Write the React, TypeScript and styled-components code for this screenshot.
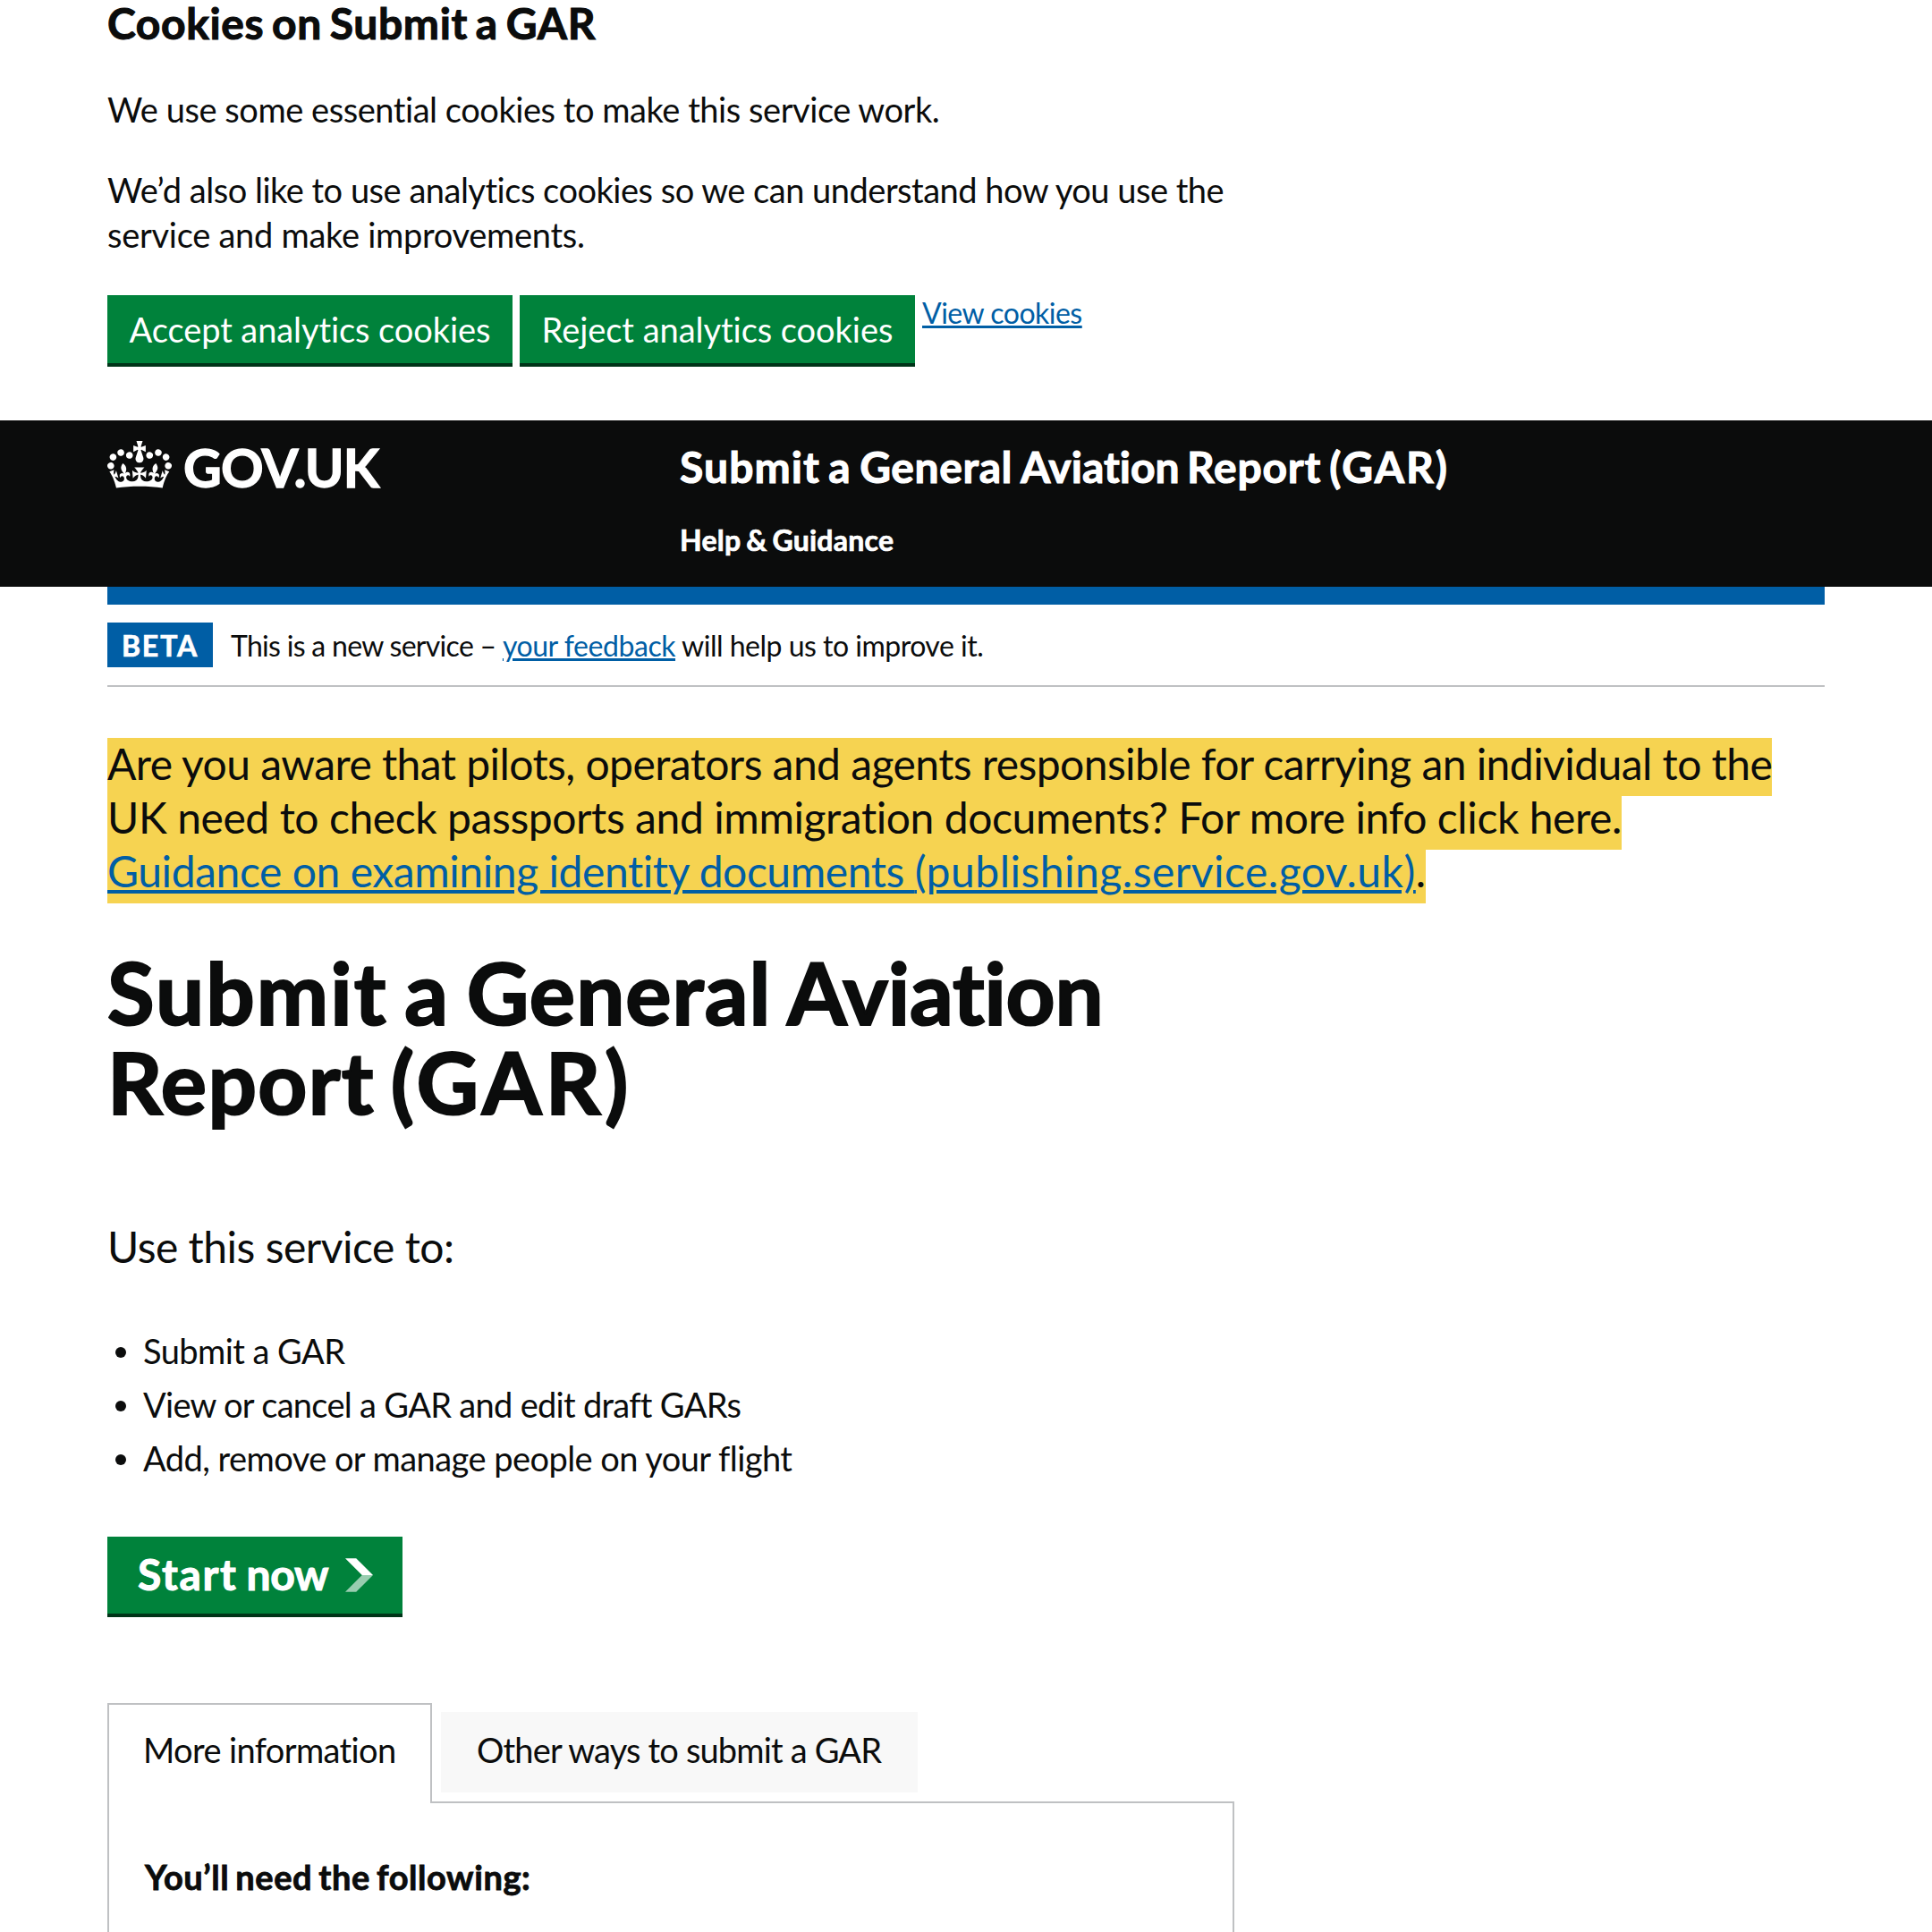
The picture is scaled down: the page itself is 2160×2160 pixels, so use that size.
import React from 'react';
import styled, { createGlobalStyle, css } from 'styled-components';

const ink = '#0b0c0c';
const blue = '#005ea5';
const green = '#00823b';
const greenShadow = '#003418';
const rule = '#bfc1c3';
const yellow = '#f6d351';

const bold = css`
  font-weight: 700;
  word-spacing: -0.07em;
  -webkit-text-stroke: 0.022em currentColor;
`;

const GlobalStyle = createGlobalStyle`
  body {
    margin: 0;
    background: #fff;
    color: ${ink};
    font-family: Lato, 'Open Sans', sans-serif;
    font-variant-ligatures: none;
  }
  *, *::before { box-sizing: border-box; }
`;

const Page = styled.div`
  width: 2160px;
  height: 2160px;
  overflow: hidden;
`;

const Container = styled.div`
  width: 1920px;
  margin: 0 auto;
`;

const Line = styled.span<{ $track?: number }>`
  letter-spacing: ${p => p.$track ?? 0}px;
  white-space: nowrap;
`;

const Link = styled.a`
  color: ${blue};
  text-decoration: underline;
  text-decoration-thickness: 3px;
  text-underline-offset: 2px;
`;

const CookieBanner = styled.section`
  padding-bottom: 60px;
`;

const CookieTitle = styled.h2`
  margin: 0 0 46px;
  padding-top: 1px;
  font-size: 48px;
  line-height: 50px;
  ${bold}
`;

const Body = styled.p<{ $after: number }>`
  margin: 0 0 ${p => p.$after}px;
  font-size: 38px;
  line-height: 50px;
`;

const ButtonGroup = styled.div`
  display: flex;
  align-items: flex-start;
  gap: 8px;
`;

const Button = styled.button<{ $width: number }>`
  width: ${p => p.$width}px;
  margin-bottom: 4px;
  padding: 13px 0;
  border: 0;
  background: ${green};
  box-shadow: 0 4px 0 ${greenShadow};
  color: #fff;
  font: 400 38px/50px Lato, 'Open Sans', sans-serif;
`;

const CookieLink = styled(Link)`
  font-size: 32px;
  line-height: 40px;
`;

const Header = styled.header`
  height: 186px;
  padding-top: 22px;
  background: ${ink};
  color: #fff;
`;

const HeaderRow = styled(Container)`
  display: grid;
  grid-template-columns: 640px 1fr;
`;

const Logo = styled.a`
  display: flex;
  align-items: flex-start;
  gap: 13px;
  color: #fff;
  font-size: 59px;
  line-height: 62px;
  ${bold}
`;

const CrownSvg = styled.svg`
  width: 72px;
  height: 53px;
  margin-top: 1px;
  fill: currentColor;
`;

const ServiceName = styled.div`
  font-size: 48px;
  line-height: 60px;
  ${bold}
`;

const NavItem = styled.a`
  display: block;
  margin-top: 32px;
  font-size: 32px;
  line-height: 40px;
  ${bold}
`;

const BlueBar = styled.div`
  height: 20px;
  background: ${blue};
`;

const PhaseBanner = styled.div`
  display: flex;
  gap: 20px;
  height: 92px;
  padding-top: 20px;
  border-bottom: 2px solid ${rule};
  font-size: 32px;
  line-height: 52px;
`;

const Tag = styled.strong`
  width: 118px;
  height: 50px;
  background: ${blue};
  color: #fff;
  text-align: center;
  ${bold}
`;

const Warning = styled.p`
  margin: 56px 0 55px;
  font-size: 48px;
  line-height: 60px;
`;

const Highlight = styled.span`
  padding: 0 0 8px;
  background: ${yellow};
  box-decoration-break: clone;
  -webkit-box-decoration-break: clone;
`;

const WarningLink = styled(Link)`
  text-decoration-thickness: 4px;
  text-underline-offset: 3px;
`;

const Title = styled.h1`
  margin: 0 0 105px;
  font-size: 96px;
  line-height: 100px;
  ${bold}
`;

const Lead = styled.p`
  margin: 0 0 61px;
  font-size: 48px;
  line-height: 60px;
`;

const List = styled.ul`
  display: grid;
  gap: 10px;
  margin: 0 0 63px;
  padding: 0;
  list-style: none;
`;

const Item = styled.li`
  display: flex;
  align-items: flex-start;
  font-size: 38px;
  line-height: 50px;

  &::before {
    content: '';
    width: 12px;
    height: 12px;
    margin: 21px 19px 0 9px;
    border-radius: 50%;
    background: ${ink};
  }
`;

const StartButton = styled.a`
  display: flex;
  align-items: flex-start;
  justify-content: space-between;
  width: 330px;
  height: 86px;
  margin-bottom: 100px;
  padding: 12px 33px 0 34px;
  background: ${green};
  box-shadow: 0 4px 0 ${greenShadow};
  color: #fff;
  font-size: 48px;
  line-height: 60px;
  ${bold}
`;

const Chevron = styled.svg`
  width: 31px;
  height: 38px;
  margin-top: 12px;
  fill: #fff;
`;

const Tabs = styled.div`
  width: 1260px;
`;

const TabList = styled.div`
  display: flex;
  align-items: flex-start;
  gap: 10px;
  height: 110px;
`;

const Tab = styled.a<{ $selected?: boolean; $width: number }>`
  width: ${p => p.$width}px;
  height: ${p => (p.$selected ? 112 : 90)}px;
  margin-top: ${p => (p.$selected ? 0 : 10)}px;
  padding: ${p => (p.$selected ? '25px 0 0 38px' : '17px 0 0 40px')};
  border: ${p => (p.$selected ? `2px solid ${rule}` : '0')};
  border-bottom: 0;
  background: ${p => (p.$selected ? '#fff' : '#f8f8f8')};
  position: relative;
  font-size: 38px;
  line-height: 50px;
`;

const Panel = styled.div`
  height: 300px;
  padding: 57px 40px;
  border: 2px solid ${rule};
`;

const PanelTitle = styled.h3`
  margin: 0;
  font-size: 38px;
  line-height: 50px;
  ${bold}
`;

const Crown = () => (
  <CrownSvg viewBox="0 0 132 97" aria-hidden="true">
    <path d="M25 30.2c3.5 1.5 7.7-.2 9.1-3.7 1.5-3.6-.2-7.8-3.9-9.2-3.6-1.4-7.6.3-9.1 3.9-1.4 3.5.3 7.5 3.9 9zM9 39.5c3.6 1.5 7.8-.2 9.2-3.7 1.5-3.6-.2-7.8-3.9-9.1-3.6-1.5-7.6.2-9.1 3.8-1.4 3.5.3 7.5 3.8 9zM4.4 57.2c3.5 1.5 7.7-.2 9.1-3.8 1.5-3.6-.2-7.7-3.9-9.1-3.5-1.5-7.6.3-9.1 3.8-1.4 3.5.3 7.6 3.9 9.1zm38.3-21.4c3.5 1.5 7.7-.2 9.1-3.8 1.5-3.6-.2-7.7-3.9-9.1-3.6-1.5-7.6.3-9.1 3.8-1.3 3.6.4 7.7 3.9 9.1zm64.4-5.6c-3.6 1.5-7.8-.2-9.1-3.7-1.5-3.6.2-7.8 3.8-9.2 3.6-1.4 7.7.3 9.2 3.9 1.3 3.5-.4 7.5-3.9 9zm15.9 9.3c-3.6 1.5-7.7-.2-9.1-3.7-1.5-3.6.2-7.8 3.7-9.1 3.6-1.5 7.7.2 9.2 3.8 1.5 3.5-.3 7.5-3.8 9zm4.7 17.7c-3.6 1.5-7.8-.2-9.2-3.8-1.5-3.6.2-7.7 3.9-9.1 3.6-1.5 7.7.3 9.2 3.8 1.3 3.5-.4 7.6-3.9 9.1zM89.3 35.8c-3.6 1.5-7.8-.2-9.2-3.8-1.4-3.6.2-7.7 3.9-9.1 3.6-1.5 7.7.3 9.2 3.8 1.4 3.6-.3 7.7-3.9 9.1zM69.7 17.7l8.9 4.7V9.3l-8.9 2.8c-.2-.3-.5-.6-.9-.9L72.4 0H59.6l3.5 11.2c-.3.3-.6.5-.9.9l-8.8-2.8v13.1l8.8-4.7c.3.3.6.7.9.9l-5 15.4v.1c-.2.8-.4 1.6-.4 2.4 0 4.1 3.1 7.5 7 8.1h.2c.3 0 .7.1 1 .1.4 0 .7 0 1-.1h.2c4-.6 7.1-4.1 7.1-8.1 0-.8-.1-1.7-.4-2.4V34l-5.1-15.4c.4-.2.7-.6 1-.9zM66 92.8c16.9 0 32.8 1.1 47.1 3.2 4-16.9 8.9-26.7 14-33.5l-9.6-3.4c1 4.9 1.1 7.2 0 10.2-1.5-1.4-3-4.3-4.2-8.7L108.6 76c2.8-2 5-3.2 7.5-3.3-4.4 9.4-10 11.9-13.6 11.2-4.3-.8-6.3-4.6-5.6-7.9 1-4.7 5.7-5.9 8-.5 4.3-8.7-3-11.4-7.6-8.8 7.1-7.2 7.9-13.5 2.1-21.1-8 6.1-8.1 12.3-4.5 20.8-4.7-5.4-12.1-2.5-9.5 6.2 3.4-5.2 7.9-2 7.2 3.1-.6 4.3-6.4 7.8-13.5 7.2-10.3-.9-10.9-8-11.2-13.8 2.5-.5 7.1 1.8 11 7.3L80.2 60c-4.1 4.4-8 5.3-12.3 5.4 1.4-4.4 8-11.6 8-11.6H55.5s6.4 7.2 7.9 11.6c-4.2-.1-8-1-12.3-5.4l1.4 16.4c3.9-5.5 8.5-7.7 10.9-7.3-.3 5.8-.9 12.8-11.1 13.8-7.2.6-12.9-2.9-13.5-7.2-.7-5 3.8-8.3 7.1-3.1 2.7-8.7-4.6-11.6-9.4-6.2 3.7-8.5 3.6-14.7-4.6-20.8-5.8 7.6-5 13.9 2.2 21.1-4.7-2.6-11.9.1-7.7 8.8 2.3-5.5 7.1-4.2 8.1.5.7 3.3-1.3 7.1-5.7 7.9-3.5.7-9-1.8-13.5-11.2 2.5.1 4.7 1.3 7.5 3.3l-4.7-15.4c-1.2 4.4-2.7 7.2-4.3 8.7-1.1-3-.9-5.3 0-10.2l-9.5 3.4c5 6.9 9.9 16.7 14 33.5 14.8-2.1 30.8-3.2 47.7-3.2z" />
  </CrownSvg>
);

export default function App() {
  return (
    <Page>
      <GlobalStyle />
      <CookieBanner>
        <Container>
          <CookieTitle><Line $track={0.6}>Cookies on Submit a GAR</Line></CookieTitle>
          <Body $after={40}><Line $track={-0.45}>We use some essential cookies to make this service work.</Line></Body>
          <Body $after={43}>
            <Line $track={-0.49}>We’d also like to use analytics cookies so we can understand how you use the</Line><br />
            <Line $track={-0.28}>service and make improvements.</Line>
          </Body>
          <ButtonGroup>
            <Button $width={453}><Line $track={-0.08}>Accept analytics cookies</Line></Button>
            <Button $width={442}><Line $track={-0.04}>Reject analytics cookies</Line></Button>
            <CookieLink><Line $track={-0.5}>View cookies</Line></CookieLink>
          </ButtonGroup>
        </Container>
      </CookieBanner>

      <Header>
        <HeaderRow>
          <Logo><Crown /><Line $track={-0.8}>GOV.UK</Line></Logo>
          <div>
            <ServiceName>
              <Line $track={1.08}>Submit a </Line>
              <Line $track={0.6}>General </Line>
              <Line $track={0}>Aviation </Line>
              <Line $track={0.78}>Report </Line>
              <Line $track={1.9}>(GAR)</Line>
            </ServiceName>
            <NavItem><Line $track={0.26}>Help &amp; Guidance</Line></NavItem>
          </div>
        </HeaderRow>
      </Header>

      <Container>
        <BlueBar />
        <PhaseBanner>
          <Tag><Line $track={1.9}>BETA</Line></Tag>
          <span>
            <Line $track={-0.7}>This is a new service – </Line>
            <Link><Line $track={-0.45}>your feedback</Line></Link>
            <Line $track={-0.5}> will help us to improve it.</Line>
          </span>
        </PhaseBanner>

        <Warning>
          <Highlight>
            <Line $track={-0.56}>Are you aware that pilots, operators and agents responsible for carrying an individual to the</Line><br />
            <Line $track={-0.42}>UK need to check passports and immigration documents? For more info click here.</Line><br />
            <WarningLink>
              <Line $track={-0.43}>Guidance on examining identity documents </Line>
              <Line $track={0.5}>(publishing.service.gov.uk)</Line>
            </WarningLink>.
          </Highlight>
        </Warning>

        <Title>
          <Line $track={2.1}>Submit a </Line>
          <Line $track={1}>General </Line>
          <Line $track={-0.2}>Aviation</Line><br />
          <Line $track={1.3}>Report </Line>
          <Line $track={4.4}>(GAR)</Line>
        </Title>

        <Lead><Line $track={-0.5}>Use this service to:</Line></Lead>
        <List>
          <Item><Line $track={-0.55}>Submit a GAR</Line></Item>
          <Item><Line $track={-0.7}>View or cancel a GAR and edit draft GARs</Line></Item>
          <Item><Line $track={-0.55}>Add, remove or manage people on your flight</Line></Item>
        </List>

        <StartButton>
          <span><Line $track={1.65}>Start </Line><Line $track={-0.4}>now</Line></span>
          <Chevron viewBox="0 0 33 40" aria-hidden="true">
            <path d="M0 0h13l20 20H20z" />
            <path d="M20 20h13L13 40H0z" opacity="0.6" />
          </Chevron>
        </StartButton>

        <Tabs>
          <TabList>
            <Tab $selected $width={363}><Line $track={-0.63}>More information</Line></Tab>
            <Tab $width={533}><Line $track={-0.83}>Other ways to submit a GAR</Line></Tab>
          </TabList>
          <Panel>
            <PanelTitle><Line $track={0.56}>You’ll need the following:</Line></PanelTitle>
          </Panel>
        </Tabs>
      </Container>
    </Page>
  );
}
